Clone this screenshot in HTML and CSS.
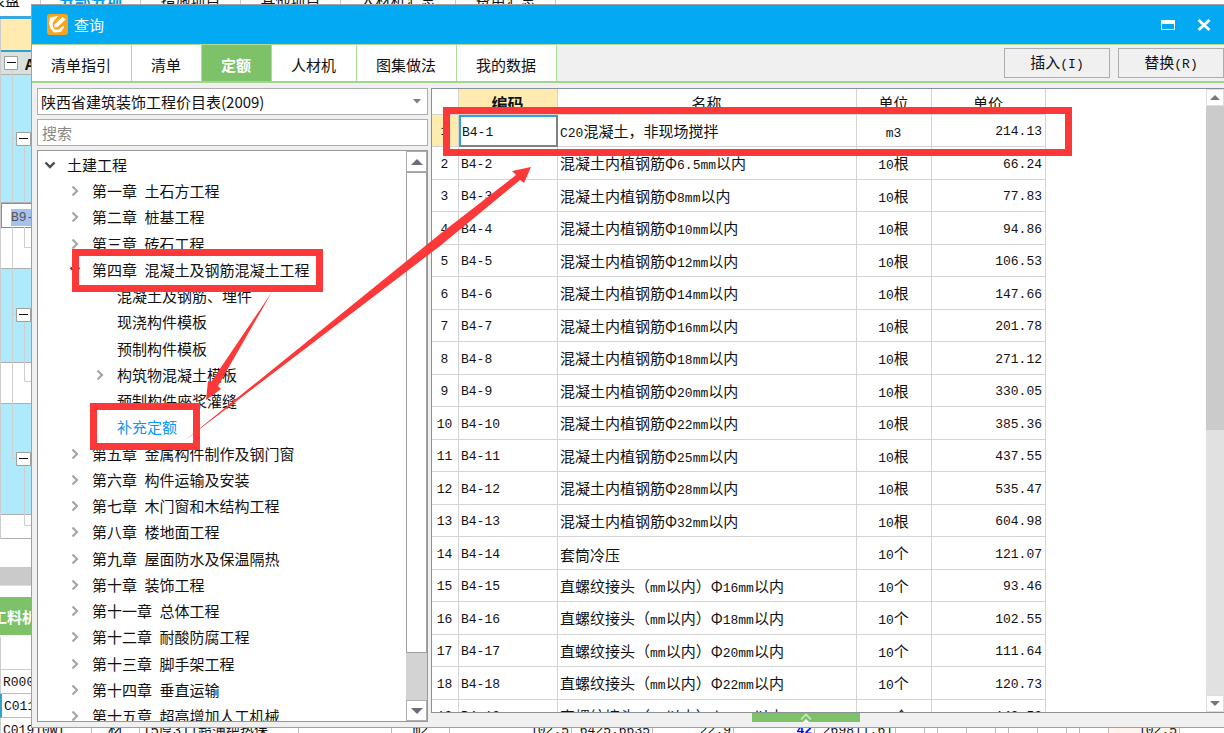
FILE: index.html
```html
<!DOCTYPE html>
<html lang="zh-CN">
<head>
<meta charset="utf-8">
<title>查询</title>
<link rel="stylesheet" href="styles.css">
</head>
<body>
<svg class="defs" aria-hidden="true">
  <symbol id="right" viewBox="0 0 12 12"><path d="M3.500 1.500 8 6l-4.500 4.500" fill="none" stroke="#a6a6a6" stroke-width="2.200"/></symbol>
  <symbol id="down" viewBox="0 0 12 12"><path d="M1.500 3.500 6 8l4.500-4.500" fill="none" stroke="#4c4c4c" stroke-width="2.400"/></symbol>
</svg>

<main class="app">
  <div class="app-tabs">
    <span>表盘</span><span class="on">分部分项</span><span>措施项目</span><span>其他项目</span><span>人材机汇总</span><span>费用汇总</span>
  </div>
  <div class="app-sheet">
    <div class="g-head"></div>
    <div class="g-root">A</div>
    <div class="g-blue g-1"></div>
    <div class="g-cell"><span>B9-1</span></div>
    <div class="g-white g-2"></div>
    <div class="g-blue g-3"></div>
    <div class="g-white g-2"></div>
    <div class="g-blue g-4"></div>
    <div class="g-white g-5"></div>
    <svg class="guides" width="31" height="540" viewBox="0 0 31 540">
      <g fill="none" stroke="#cfcfcf">
        <path d="M11.500 70V203M11.500 227V458.500H16M11.500 138.500H16M23.500 145V203M23.500 227V247.500H31M11.500 314.500H16M23.500 322V381.500H31M23.500 466V525.500H31"/>
      </g>
      <g fill="#fff" stroke="#a0a0a0">
        <path d="M3.500 56.500h13v13h-13zM15.500 132.500h14v13h-14zM15.500 308.500h14v13h-14zM15.500 452.500h14v13h-14z"/>
      </g>
      <path d="M6 62.500h9M18 138.500h9M18 314.500h9M18 458.500h9" stroke="#111" stroke-width="1"/>
    </svg>
  </div>
  <div class="app-split"></div>
  <div class="app-green">工料机显示</div>
  <div class="app-colhead"></div>
  <div class="app-row"><span class="c1">R00001</span></div>
  <div class="app-row current"><span class="c1">C01156</span></div>
  <div class="app-row">
    <span class="c1">C01910WI</span><span class="c2">材</span><span class="c3">15厚311超薄绝热保…</span><span class="c4"></span><span class="c5">m2</span><span class="c6">102.5</span><span class="c7">6425.6635</span><span class="c7">22.9</span><span class="c7 blue">42</span><span class="c7">269811.61</span><span class="c8"></span><span class="c9"></span><span class="c8"></span><span class="c8"></span><span class="c9"></span><span class="c8"></span><span class="c8"></span><span class="c9"></span><span class="c8"></span><span class="c10">102.5</span><span class="c4"></span>
  </div>
</main>

<section class="dialog" role="dialog" aria-label="查询">
  <header class="title">
    <svg width="21" height="21" viewBox="0 0 21 21"><rect width="21" height="21" rx="3" fill="#f7a51c"/><path d="M11.500 2 8 2.500 3 3.500 2 9.500l1.500 5L7 18.500l7-.5 3.500-6-3 1-2.500 2.500-4 .2L6 13l-.5-4L8 5.500z" fill="#fff"/><path d="M7 10.500 15.500 2.500l3.500 3-8.500 8-3.500.5z" fill="#fff" stroke="#f7a51c" stroke-width=".8"/></svg>
    <h1>查询</h1>
    <button aria-label="最大化"><svg width="14" height="10" viewBox="0 0 14 10"><path d="M.5.500h13v9H.5z" fill="none" stroke="#fff"/><path d="M0 0h14v4H0z" fill="#fff"/></svg></button>
    <button aria-label="关闭"><svg width="14" height="12" viewBox="0 0 14 12"><path d="M1.500 1l11 10M12.500 1l-11 10" stroke="#fff" stroke-width="2.800"/></svg></button>
  </header>
  <nav class="tabs">
    <button>清单指引</button><button>清单</button><button class="on">定额</button><button>人材机</button><button>图集做法</button><button>我的数据</button>
    <div class="actions"><button>插入<span class="n">(I)</span></button><button>替换<span class="n">(R)</span></button></div>
  </nav>
  <div class="body">
    <aside class="side">
      <div class="combo">
        <select aria-label="定额库"><option>陕西省建筑装饰工程价目表(2009)</option></select>
        <svg width="8" height="5" viewBox="0 0 8 5"><path d="M0 0h8L4 4.500z" fill="#7b7f88"/></svg>
      </div>
      <input class="search" type="text" placeholder="搜索" aria-label="搜索">
      <div class="tree">
        <ul>
          <li><svg><use href="#down"/></svg>土建工程</li>
          <li class="l1"><svg><use href="#right"/></svg><b>第一章</b> 土石方工程</li>
          <li class="l1"><svg><use href="#right"/></svg><b>第二章</b> 桩基工程</li>
          <li class="l1"><svg><use href="#right"/></svg><b>第三章</b> 砖石工程</li>
          <li class="l1"><svg><use href="#down"/></svg><b>第四章</b> 混凝土及钢筋混凝土工程</li>
          <li class="l2"><i></i>混凝土及钢筋、埋件</li>
          <li class="l2"><i></i>现浇构件模板</li>
          <li class="l2"><i></i>预制构件模板</li>
          <li class="l2"><svg><use href="#right"/></svg>构筑物混凝土模板</li>
          <li class="l2"><i></i>预制构件座浆灌缝</li>
          <li class="l2 on"><i></i>补充定额</li>
          <li class="l1"><svg><use href="#right"/></svg><b>第五章</b> 金属构件制作及钢门窗</li>
          <li class="l1"><svg><use href="#right"/></svg><b>第六章</b> 构件运输及安装</li>
          <li class="l1"><svg><use href="#right"/></svg><b>第七章</b> 木门窗和木结构工程</li>
          <li class="l1"><svg><use href="#right"/></svg><b>第八章</b> 楼地面工程</li>
          <li class="l1"><svg><use href="#right"/></svg><b>第九章</b> 屋面防水及保温隔热</li>
          <li class="l1"><svg><use href="#right"/></svg><b>第十章</b> 装饰工程</li>
          <li class="l1"><svg><use href="#right"/></svg><b>第十一章</b> 总体工程</li>
          <li class="l1"><svg><use href="#right"/></svg><b>第十二章</b> 耐酸防腐工程</li>
          <li class="l1"><svg><use href="#right"/></svg><b>第十三章</b> 脚手架工程</li>
          <li class="l1"><svg><use href="#right"/></svg><b>第十四章</b> 垂直运输</li>
          <li class="l1"><svg><use href="#right"/></svg><b>第十五章</b> 超高增加人工机械</li>
        </ul>
        <div class="bar bar-tree">
          <button aria-label="向上"><svg width="12" height="6" viewBox="0 0 12 6"><path d="M6 0l6 6H0z" fill="#6a6f80"/></svg></button>
          <div class="thumb"></div>
          <button aria-label="向下"><svg width="12" height="6" viewBox="0 0 12 6"><path d="M0 0h12L6 6z" fill="#6a6f80"/></svg></button>
        </div>
      </div>
    </aside>
    <div class="main">
      <div class="grid">
        <div class="grid-view">
          <table>
            <colgroup><col class="w1"><col class="w2"><col class="w3"><col class="w4"><col class="w5"></colgroup>
            <thead><tr><th></th><th class="on">编码</th><th>名称</th><th>单位</th><th>单价</th></tr></thead>
            <tbody>
              <tr class="sel"><td>1</td><td>B4-1</td><td><span class="n">C20</span>混凝土，非现场搅拌</td><td><span class="n">m3</span></td><td>214.13</td></tr>
              <tr><td>2</td><td>B4-2</td><td>混凝土内植钢筋Φ<span class="n">6.5mm</span>以内</td><td><span class="n">10</span>根</td><td>66.24</td></tr>
              <tr><td>3</td><td>B4-3</td><td>混凝土内植钢筋Φ<span class="n">8mm</span>以内</td><td><span class="n">10</span>根</td><td>77.83</td></tr>
              <tr><td>4</td><td>B4-4</td><td>混凝土内植钢筋Φ<span class="n">10mm</span>以内</td><td><span class="n">10</span>根</td><td>94.86</td></tr>
              <tr><td>5</td><td>B4-5</td><td>混凝土内植钢筋Φ<span class="n">12mm</span>以内</td><td><span class="n">10</span>根</td><td>106.53</td></tr>
              <tr><td>6</td><td>B4-6</td><td>混凝土内植钢筋Φ<span class="n">14mm</span>以内</td><td><span class="n">10</span>根</td><td>147.66</td></tr>
              <tr><td>7</td><td>B4-7</td><td>混凝土内植钢筋Φ<span class="n">16mm</span>以内</td><td><span class="n">10</span>根</td><td>201.78</td></tr>
              <tr><td>8</td><td>B4-8</td><td>混凝土内植钢筋Φ<span class="n">18mm</span>以内</td><td><span class="n">10</span>根</td><td>271.12</td></tr>
              <tr><td>9</td><td>B4-9</td><td>混凝土内植钢筋Φ<span class="n">20mm</span>以内</td><td><span class="n">10</span>根</td><td>330.05</td></tr>
              <tr><td>10</td><td>B4-10</td><td>混凝土内植钢筋Φ<span class="n">22mm</span>以内</td><td><span class="n">10</span>根</td><td>385.36</td></tr>
              <tr><td>11</td><td>B4-11</td><td>混凝土内植钢筋Φ<span class="n">25mm</span>以内</td><td><span class="n">10</span>根</td><td>437.55</td></tr>
              <tr><td>12</td><td>B4-12</td><td>混凝土内植钢筋Φ<span class="n">28mm</span>以内</td><td><span class="n">10</span>根</td><td>535.47</td></tr>
              <tr><td>13</td><td>B4-13</td><td>混凝土内植钢筋Φ<span class="n">32mm</span>以内</td><td><span class="n">10</span>根</td><td>604.98</td></tr>
              <tr><td>14</td><td>B4-14</td><td>套筒冷压</td><td><span class="n">10</span>个</td><td>121.07</td></tr>
              <tr><td>15</td><td>B4-15</td><td>直螺纹接头（<span class="n">mm</span>以内）Φ<span class="n">16mm</span>以内</td><td><span class="n">10</span>个</td><td>93.46</td></tr>
              <tr><td>16</td><td>B4-16</td><td>直螺纹接头（<span class="n">mm</span>以内）Φ<span class="n">18mm</span>以内</td><td><span class="n">10</span>个</td><td>102.55</td></tr>
              <tr><td>17</td><td>B4-17</td><td>直螺纹接头（<span class="n">mm</span>以内）Φ<span class="n">20mm</span>以内</td><td><span class="n">10</span>个</td><td>111.64</td></tr>
              <tr><td>18</td><td>B4-18</td><td>直螺纹接头（<span class="n">mm</span>以内）Φ<span class="n">22mm</span>以内</td><td><span class="n">10</span>个</td><td>120.73</td></tr>
              <tr><td>19</td><td>B4-19</td><td>直螺纹接头（<span class="n">mm</span>以内）Φ<span class="n">25mm</span>以内</td><td><span class="n">10</span>个</td><td>149.53</td></tr>
            </tbody>
          </table>
        </div>
        <div class="bar bar-grid">
          <button aria-label="向上"><svg width="10" height="5" viewBox="0 0 10 5"><path d="M5 0l5 5H0z" fill="#777"/></svg></button>
          <div class="thumb"></div>
          <button aria-label="向下"><svg width="10" height="5" viewBox="0 0 10 5"><path d="M0 0h10L5 5z" fill="#777"/></svg></button>
        </div>
      </div>
      <button class="expand" aria-label="展开"><svg width="12" height="9" viewBox="0 0 12 9"><path d="M1 6.500 6 1.500l5 5" fill="none" stroke="#cdeac0" stroke-width="1.600"/><path d="M3 9l3-3 3 3z" fill="#fff"/></svg></button>
    </div>
  </div>
</section>

<svg class="marks" width="1224" height="733" viewBox="0 0 1224 733" aria-hidden="true">
  <g fill="none" stroke="#fc3838" stroke-width="7">
    <path d="M75.500 252.500h244v36h-244zM93.500 406.500h103v40h-103zM446.500 110.500h622v42h-622z"/>
  </g>
  <path d="M272 292 218 386l3 3-15 11 2-19 3 1zM184 441 440 234 516 175 512 171 531 167 524 183 520 180 440 246z" fill="#fc3838"/>
</svg>
</body>
</html>
```

FILE: styles.css
```css
* { box-sizing: border-box; }
body { margin: 0; height: 100vh; overflow: hidden; position: relative; background: #fff; color: #111; font: 15px/20px "Noto Sans CJK SC", "Noto Sans", sans-serif; }
button, input, select { font: inherit; color: inherit; margin: 0; padding: 0; border: 0; border-radius: 0; background: none; }
.defs { position: absolute; width: 0; height: 0; }
.n { font-family: "Liberation Mono", monospace; font-size: 13px; }

/* main application window */
.app { height: 100%; display: flex; flex-direction: column; overflow: hidden; }
.app > * { flex: none; }
.app-tabs { height: 19px; display: flex; align-items: flex-start; border-bottom: 3px solid #3aa8dc; line-height: 18px; }
.app-tabs span { width: 100px; height: 25px; flex: none; text-align: center; white-space: nowrap; border-right: 1px solid #ccc; margin-top: -9px; }
.app-tabs span:first-child { width: 41px; padding-right: 20px; direction: rtl; text-align: left; display: flex; }
.app-tabs .on { color: #009cf0; font-weight: bold; font-size: 16px; }
.app-tabs span:nth-child(5) { width: 115px; }
.app-sheet { position: relative; border-left: 1px solid #ccc; }
.g-head { height: 33px; background: #ffebb0; border-bottom: 2px solid #2fa2cf; }
.g-root { height: 23px; padding-left: 24px; background: #d9e1dc; font-weight: bold; border-bottom: 1px solid #b0b0b0; line-height: 24px; }
.g-blue { background: #aee9fc; border-bottom: 1px solid #b0b0b0; }
.g-white { border-bottom: 1px solid #b0b0b0; }
.g-1 { height: 128px; }
.g-2 { height: 41px; }
.g-3 { height: 94px; }
.g-4 { height: 111px; }
.g-5 { height: 24px; }
.g-cell { height: 25px; padding: 5px 0 0 9px; border: 1px solid #3aa8dc; color: #555; font: 13px/17px "Liberation Mono", monospace; }
.g-cell span { background: #a5c2ee; display: inline-block; }
.guides { position: absolute; left: 0; top: -19px; }
.app-split { height: 19px; margin: 28px 0 11px; background: #cacaca; border-bottom: 1px solid #ddd; }
.app-green { height: 38px; background: #7dc268; color: #fff; font-weight: bold; line-height: 40px; text-indent: -8px; }
.app-colhead { height: 33px; border-bottom: 1px solid #ccc; border-left: 1px solid #ccc; margin-top: 2px; }
.app-row { height: 24px; display: flex; border-bottom: 1px solid #bbb; border-left: 1px solid #ccc; font: 13px/26px "Liberation Mono", "Noto Sans CJK SC", monospace; }
.app-row.current { border-left: 2px solid #2fa2cf; }
.app-row span { flex: none; padding: 0 2px; border-right: 1px solid #bbb; text-align: right; white-space: nowrap; overflow: hidden; }
.app-row .c1 { width: 91px; text-align: left; }
.app-row .c2 { width: 48px; text-align: center; font-size: 15px; }
.app-row .c3 { width: 159px; text-align: left; font-size: 14px; }
.app-row .c4 { width: 93px; }
.app-row .c5 { width: 58px; text-align: center; }
.app-row .c6 { width: 122px; }
.app-row .c7 { width: 81px; }
.app-row .c8 { width: 29px; }
.app-row .c9 { width: 13px; }
.app-row .c10 { width: 71px; background: #fff5ec; }
.app-row .blue { color: #00f; font-weight: bold; }

/* query dialog */
.dialog { position: absolute; inset: 4px 0 5px 31px; display: flex; flex-direction: column; background: #f0f0f0; border: 1px solid #a0a0a0; border-right: 0; }
.title { flex: none; height: 39px; display: flex; align-items: center; gap: 6px; padding: 0 13px 0 15px; background: #03a9f3; color: #fff; }
.title h1 { flex: 1; margin: 0; font-size: 15px; font-weight: normal; }
.title button { width: 30px; height: 24px; display: grid; place-items: center; }
.title button:last-child { width: 14px; margin-left: 8px; }
.tabs { flex: none; height: 39px; display: flex; border-top: 1px solid #a9dd98; border-bottom: 2px solid #a2d690; }
.tabs > button { padding: 4px 20px 0 19px; background: #fff; border-right: 1px solid #a9dd98; }
.tabs > .on { background: #7dc268; color: #fff; font-weight: bold; }
.actions { margin-left: auto; display: flex; gap: 8px; padding: 3px 0 3px; }
.actions button { width: 106px; background: #f0f0f0; border: 1px solid #adadad; }
.body { flex: 1; min-height: 0; display: flex; gap: 3px; padding: 5px 0 5px 5px; }
.side { flex: none; width: 391px; display: flex; flex-direction: column; gap: 4px; }
.combo { flex: none; height: 27px; display: grid; align-items: center; border: 1px solid #adadad; background: #fff; }
.combo select { grid-area: 1 / 1; appearance: none; width: 100%; height: 100%; padding: 0 3px; font-family: "Noto Sans CJK SC", sans-serif; }
.combo svg { grid-area: 1 / 1; justify-self: end; margin-right: 6px; pointer-events: none; }
.search { flex: none; height: 27px; padding: 0 4px; border: 1px solid #adadad; background: #fff; }
.search::placeholder { color: #888; opacity: 1; }
.tree { flex: 1; min-height: 0; display: flex; overflow: hidden; border: 1px solid #9499a0; background: #fff; }
.tree ul { flex: 1; margin: 0; padding: 1px 0 0; list-style: none; }
.tree li { height: 26px; line-height: 28px; padding-left: 4px; display: flex; align-items: center; white-space: pre; }
.tree li:nth-child(4n) { height: 27px; }
.tree svg { flex: none; }
.tree li svg { width: 12px; height: 12px; margin: 0 11px 0 2px; }
.tree li i { width: 25px; flex: none; }
.tree li b { font-weight: normal; margin-right: 4px; }
.tree .l1 { padding-left: 29px; }
.tree .l2 { padding-left: 54px; }
.tree .on { color: #0a96fb; }
.bar { flex: none; display: flex; flex-direction: column; }
.bar button { flex: none; display: grid; place-items: center; background: #fff; border: 1px solid #adadad; }
.bar-tree { width: 21px; background: #d3d3d3; }
.bar-tree button { height: 21px; }
.bar-tree .thumb { height: 481px; background: #fff; border: 1px solid #a0a0a0; }
.bar-grid { width: 18px; background: #e1e1e1; }
.bar-grid button { height: 17px; border-color: #ddd; }
.bar-grid .thumb { height: 324px; background: #cbcbcb; }
.bar button:last-child { margin-top: auto; }
.main { flex: 1; min-width: 0; display: flex; flex-direction: column; align-items: center; }
.grid { flex: 1; min-height: 0; align-self: stretch; display: flex; border: 1px solid #8b9097; border-right: 0; background: #fff; }
.grid-view { flex: 1; min-width: 0; overflow: hidden; }
.expand { flex: none; width: 108px; height: 9px; margin-right: 44px; background: #7dc268; display: grid; place-items: center; }
table { table-layout: fixed; width: 614px; border-collapse: separate; border-spacing: 0; }
.w1 { width: 27px; }
.w2 { width: 99px; }
.w3 { width: 299px; }
.w4 { width: 75px; }
.w5 { width: 114px; }
th, td { padding: 0 3px 0 2px; border-right: 1px solid #d4d4d4; border-bottom: 1px solid #d4d4d4; white-space: nowrap; overflow: hidden; }
th { height: 26px; padding-top: 3px; font-weight: normal; line-height: 20px; }
th.on { background: #ffebb0; font-weight: bold; font-size: 16px; }
td { height: 32px; padding-top: 3px; }
tr:nth-child(even) td { height: 33px; }
td:nth-child(1), td:nth-child(2), td:nth-child(5) { font-family: "Liberation Mono", monospace; font-size: 13px; }
td:nth-child(1), td:nth-child(4) { text-align: center; }
td:nth-child(5) { text-align: right; }
.sel td:first-child { background: #ffebb0; }
.sel td:nth-child(2) { padding-left: 1px; border: 2px solid #808080; border-top-color: #2fa2cf; border-left-color: #2fa2cf; }

/* annotations over the window */
.marks { position: absolute; left: 0; top: 0; pointer-events: none; }
```
